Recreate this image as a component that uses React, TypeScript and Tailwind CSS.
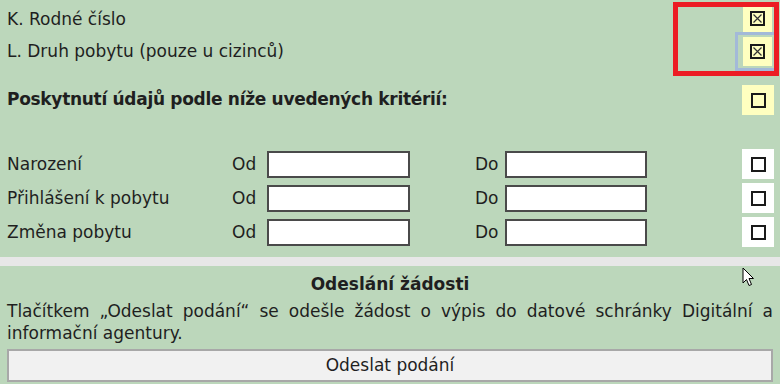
import React from "react";

const font = { fontFamily: '"DejaVu Sans", Verdana, sans-serif' };

function Box({ checked }: { checked?: boolean }) {
  return (
    <svg width="15" height="15" viewBox="0 0 15 15" className="block">
      <rect x="1" y="1" width="13" height="13" fill="none" stroke="#1a1a1a" strokeWidth="2" />
      {checked && (
        <path d="M3.5 3.5 L11.5 11.5 M11.5 3.5 L3.5 11.5" stroke="#333" strokeWidth="1.2" />
      )}
    </svg>
  );
}

function Cell({ bg, checked, className = "" }: { bg: string; checked?: boolean; className?: string }) {
  return (
    <div className={`flex items-center justify-center ${bg} ${className}`}>
      <Box checked={checked} />
    </div>
  );
}

const rangeRows = ["Narození", "Přihlášení k pobytu", "Změna pobytu"];

export default function App() {
  return (
    <div
      className="relative h-[384px] w-[780px] overflow-hidden bg-[#bcd7bb] text-[17px] text-[#1f1f1f]"
      style={font}
    >
      {/* kritéria */}
      <div className="flex h-[257px] flex-col">
        <div className="flex h-[32px] items-center pl-[7px] pr-[8px] pt-[4px]">
          <span className="flex-1 pt-[3px]">K. Rodné číslo</span>
          <Cell bg="bg-[#ffffc0]" checked className="h-[28px] w-[29px]" />
        </div>
        <div className="flex h-[39px] items-center pl-[7px] pr-[2px]">
          <span className="flex-1">L. Druh pobytu (pouze u cizinců)</span>
          <div className="flex h-[39px] w-[43px] items-center border-[3px] border-[#a3b9d8] pl-[5px]">
            <Cell bg="bg-[#ffffc0]" checked className="h-[29px] w-[29px]" />
          </div>
        </div>
        <div className="mt-[14px] flex h-[30px] items-center pl-[7px] pr-[6px]">
          <span className="flex-1 font-bold tracking-[-0.3px]">
            Poskytnutí údajů podle níže uvedených kritérií:
          </span>
          <Cell bg="bg-[#ffffc0]" className="h-[30px] w-[32px]" />
        </div>
        <div className="mt-[34px] flex flex-col gap-[4px]">
          {rangeRows.map((label) => (
            <div key={label} className="flex h-[30px] items-center pl-[7px] pr-[6px]">
              <span className="w-[225px] pt-[2px]">{label}</span>
              <span className="w-[35px] pt-[2px]">Od</span>
              <input className="h-[27px] w-[143px] border-2 border-[#4a4a4a] bg-white" />
              <span className="ml-[65px] w-[30px] pt-[2px]">Do</span>
              <input className="h-[27px] w-[142px] border-2 border-[#4a4a4a] bg-white" />
              <div className="flex-1" />
              <Cell bg="bg-white" className="h-[30px] w-[32px]" />
            </div>
          ))}
        </div>
      </div>

      <div className="h-[9px] bg-[#e7e7e7]" />

      {/* odeslání */}
      <div className="flex flex-col px-[7px] pt-[7px]">
        <div className="text-center font-bold leading-[22px]">Odeslání žádosti</div>
        <p className="mt-[5px] leading-[22px]">
          <span className="block text-justify [text-align-last:justify]">
            Tlačítkem „Odeslat podání“ se odešle žádost o výpis do datové schránky Digitální a
          </span>
          <span className="block">informační agentury.</span>
        </p>
        <button className="mt-[5px] h-[33px] w-[766px] border-2 border-[#a8a8a8] bg-[#f1f1f1] text-center">
          Odeslat podání
        </button>
      </div>

      {/* zvýraznění */}
      <div className="pointer-events-none absolute left-[673px] top-[2px] h-[74px] w-[106px] border-[5px] border-[#ec1c24]" />

      {/* kurzor */}
      <svg className="absolute left-[742px] top-[267px]" width="13" height="20" viewBox="0 0 13 20">
        <path d="M1 1 L1 16 L4.5 12.5 L7 18.5 L9.5 17.5 L7 11.5 L11.5 11.5 Z" fill="#fff" stroke="#000" strokeWidth="1" />
      </svg>
    </div>
  );
}
